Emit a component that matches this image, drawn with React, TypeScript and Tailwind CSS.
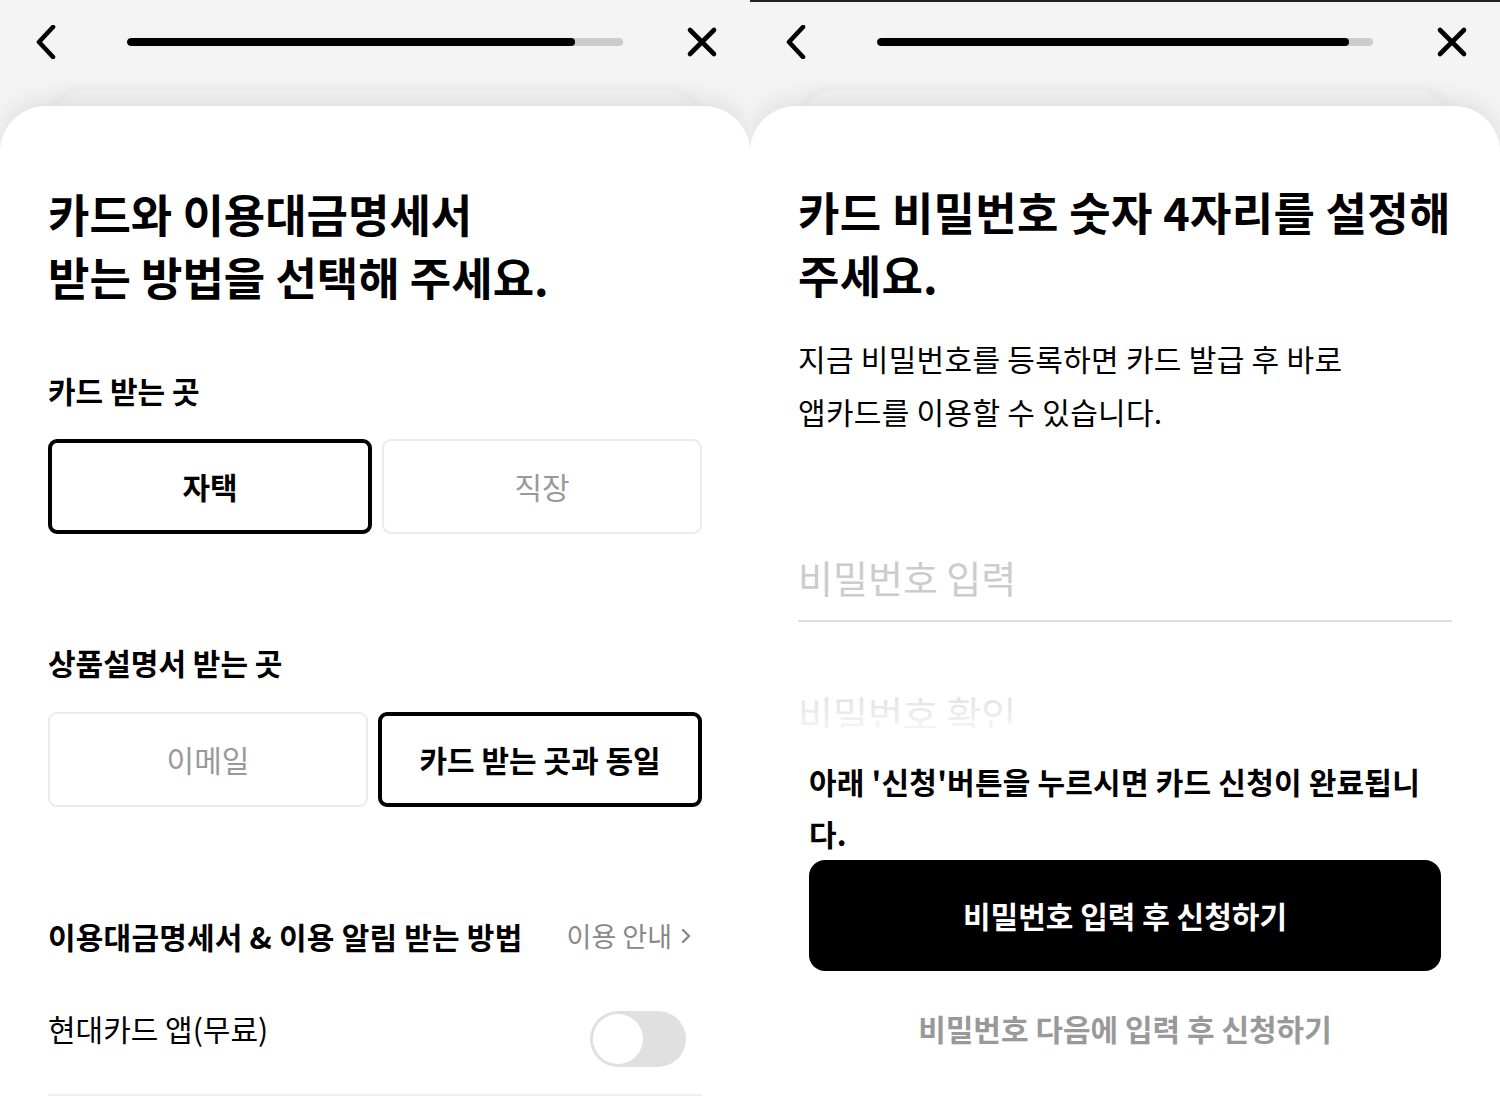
import React from 'react';

const font = { fontFamily: '"Noto Sans CJK KR", "Noto Sans", sans-serif' };

const Header = ({ fill }: { fill: string }) => (
  <div className="flex items-center h-[84px]">
    <svg className="ml-[34px] w-[24px] h-[34px]" viewBox="0 0 24 34" fill="none">
      <path d="M19 2 L5 17 L19 32" stroke="#000" strokeWidth="4.6" strokeLinecap="round" strokeLinejoin="round" />
    </svg>
    <div className="ml-[69px] w-[496px] h-[8px] rounded-full bg-[#cccccc] overflow-hidden">
      <div className={`h-full rounded-full bg-black ${fill}`} />
    </div>
    <svg className="ml-[63px] w-[32px] h-[32px]" viewBox="0 0 32 32" fill="none">
      <path d="M4 4 L28 28 M28 4 L4 28" stroke="#000" strokeWidth="4.6" strokeLinecap="round" />
    </svg>
  </div>
);

const Sheet = ({ children }: { children: React.ReactNode }) => (
  <div className="relative flex-1 mt-[22px]">
    <div className="absolute left-[52px] right-[52px] top-[-16px] h-[60px] rounded-t-[32px] bg-[#f3f3f3] shadow-[0_-4px_14px_rgba(0,0,0,0.04)]" />
    <div className="relative h-full bg-white rounded-t-[46px] shadow-[0_-6px_26px_rgba(0,0,0,0.09)]">
      {children}
    </div>
  </div>
);

const Choice = ({ label, active }: { label: string; active?: boolean }) => (
  <div
    className={`flex-1 h-[95px] rounded-[9px] flex items-center justify-center text-[30px] ${
      active ? 'border-[4px] border-black font-bold text-black' : 'border-[2px] border-[#ebebeb] text-[#999999]'
    }`}
  >
    {label}
  </div>
);

const LeftScreen = () => (
  <div className="relative w-[750px] h-[1097px] bg-[#f4f4f4] flex flex-col overflow-hidden">
    <Header fill="w-[448px]" />
    <Sheet>
      <div className="px-[48px] pt-[76px]">
        <h1 className="text-[45px] leading-[63px] font-bold text-black">
          카드와 이용대금명세서
          <br />
          받는 방법을 선택해 주세요.
        </h1>
        <div className="mt-[62px] text-[30px] leading-[40px] font-bold text-black">카드 받는 곳</div>
        <div className="mt-[29px] flex gap-[10px]">
          <Choice label="자택" active />
          <Choice label="직장" />
        </div>
        <div className="mt-[108px] text-[30px] leading-[40px] font-bold text-black">상품설명서 받는 곳</div>
        <div className="mt-[30px] flex gap-[10px]">
          <Choice label="이메일" />
          <Choice label="카드 받는 곳과 동일" active />
        </div>
        <div className="mt-[109px] flex items-center justify-between">
          <span className="text-[30px] leading-[40px] font-bold text-black tracking-[0.2px]">이용대금명세서 &amp; 이용 알림 받는 방법</span>
          <span className="flex items-center gap-[8px] text-[27px] leading-[40px] text-[#888888] mr-[10px]">
            이용 안내
            <svg className="w-[12px] h-[18px]" viewBox="0 0 12 18" fill="none">
              <path d="M3 3 L9 9 L3 15" stroke="#888" strokeWidth="2.4" strokeLinecap="round" strokeLinejoin="round" />
            </svg>
          </span>
        </div>
        <div className="mt-[52px] flex items-start justify-between">
          <span className="text-[30px] leading-[40px] text-black">현대카드 앱(무료)</span>
          <div className="mt-[3px] mr-[16px] w-[96px] h-[56px] rounded-full bg-[#e0e0e0] p-[3px]">
            <div className="w-[50px] h-[50px] rounded-full bg-white" />
          </div>
        </div>
        <div className="mt-[27px] h-[2px] bg-[#f0f0f0]" />
      </div>
    </Sheet>
  </div>
);

const RightScreen = () => (
  <div className="relative w-[750px] h-[1097px] bg-[#f4f4f4] flex flex-col overflow-hidden">
    <div className="absolute top-0 left-0 right-0 h-[2px] bg-[#222222]" />
    <Header fill="w-[472px]" />
    <Sheet>
      <div className="px-[48px] pt-[74px]">
        <h1 className="text-[45px] leading-[63px] font-bold text-black tracking-[0.3px]">
          카드 비밀번호 숫자 4자리를 설정해
          <br />
          주세요.
        </h1>
        <p className="mt-[26px] text-[30px] leading-[53px] text-black tracking-[0.3px]">
          지금 비밀번호를 등록하면 카드 발급 후 바로
          <br />
          앱카드를 이용할 수 있습니다.
        </p>
        <div className="mt-[114px] pb-[18px] border-b-2 border-[#dddddd] text-[38px] leading-[50px] text-[#cccccc]">
          비밀번호 입력
        </div>
        <div className="mt-[66px] text-[38px] leading-[50px] text-[#e2e2e2]">비밀번호 확인</div>
      </div>

      <div className="absolute left-0 right-0 bottom-0 top-[588px] flex flex-col">
        <div className="h-[34px] bg-gradient-to-b from-white/0 to-white/60" />
        <div className="bg-white flex-1 px-[59px] pt-[27px]">
          <p className="text-[30px] leading-[52px] font-bold text-black tracking-[0.2px]">
            아래 '신청'버튼을 누르시면 카드 신청이 완료됩니
            <br />
            다.
          </p>
          <button className="mt-[1px] w-full h-[111px] rounded-[16px] bg-black text-white text-[30px] font-bold flex items-center justify-center">
            비밀번호 입력 후 신청하기
          </button>
          <div className="mt-[37px] text-center text-[30px] leading-[40px] font-bold text-[#999999]">
            비밀번호 다음에 입력 후 신청하기
          </div>
        </div>
      </div>
    </Sheet>
  </div>
);

export default function App() {
  return (
    <div className="flex w-[1500px] h-[1097px] bg-white overflow-hidden" style={font}>
      <LeftScreen />
      <RightScreen />
    </div>
  );
}
